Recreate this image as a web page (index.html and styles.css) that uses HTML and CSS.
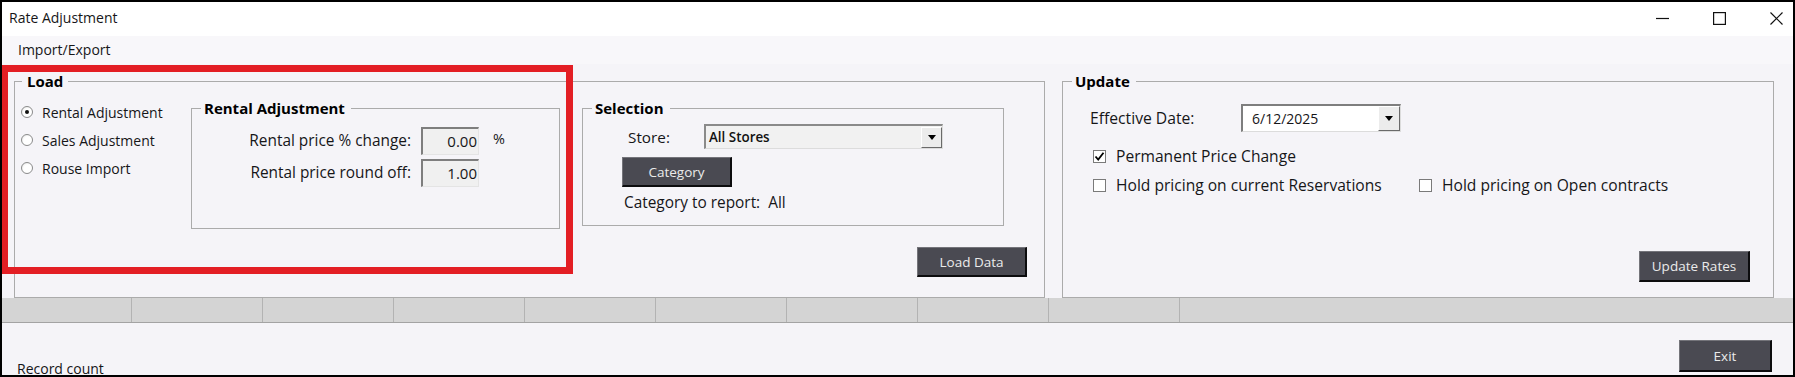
FILE: index.html
```html
<!DOCTYPE html>
<html lang="en">
<head>
<meta charset="utf-8">
<title>Rate Adjustment</title>
<link rel="stylesheet" href="styles.css">
</head>
<body>
<div class="window">
  <div class="titlebar">
    <span class="title">Rate Adjustment</span>
    <div class="caption-buttons">
      <span class="cap-btn"><svg width="13" height="13" viewBox="0 0 13 13"><path d="M0 6.5H13" stroke="#111" stroke-width="1.2"/></svg></span>
      <span class="cap-btn"><svg width="13" height="13" viewBox="0 0 13 13"><rect x="0.6" y="0.6" width="11.8" height="11.8" fill="none" stroke="#111" stroke-width="1.2"/></svg></span>
      <span class="cap-btn"><svg width="13" height="13" viewBox="0 0 13 13"><path d="M0.5 0.5L12.5 12.5M12.5 0.5L0.5 12.5" stroke="#111" stroke-width="1.2"/></svg></span>
    </div>
  </div>

  <div class="menubar"><span class="menu-item">Import/Export</span></div>

  <div class="main">
    <fieldset class="group group-load">
      <legend class="legend legend-load">Load</legend>
      <div class="load-top">
        <div class="radios">
          <label class="radio-row"><span class="radio checked"></span><span>Rental Adjustment</span></label>
          <label class="radio-row"><span class="radio"></span><span>Sales Adjustment</span></label>
          <label class="radio-row"><span class="radio"></span><span>Rouse Import</span></label>
        </div>

        <fieldset class="group group-rental">
          <legend class="legend">Rental Adjustment</legend>
          <div class="rental-fields">
            <span class="field-label">Rental price % change:</span>
            <span class="num-box">0.00</span>
            <span class="unit">%</span>
            <span class="field-label">Rental price round off:</span>
            <span class="num-box">1.00</span>
            <span class="unit"></span>
          </div>
        </fieldset>

        <fieldset class="group group-selection">
          <legend class="legend">Selection</legend>
          <div class="store-row">
            <span class="store-label">Store:</span>
            <div class="combo">
              <span class="combo-value">All Stores</span>
              <span class="combo-arrow"><span class="tri"></span></span>
            </div>
          </div>
          <div class="category-row"><button class="btn btn-category">Category</button></div>
          <div class="category-report">Category to report:&nbsp; All</div>
        </fieldset>
      </div>
      <div class="load-actions"><button class="btn btn-load">Load Data</button></div>
    </fieldset>

    <fieldset class="group group-update">
      <legend class="legend">Update</legend>
      <div class="date-row">
        <span class="date-label">Effective Date:</span>
        <div class="date-box">
          <span class="date-value">6/12/2025</span>
          <span class="combo-arrow date-arrow"><span class="tri"></span></span>
        </div>
      </div>
      <div class="check-row first">
        <label class="check-item"><span class="checkbox checked"><svg width="11" height="11" viewBox="0 0 11 11"><path d="M1.5 5.5L4.2 8.5L9.5 1.8" fill="none" stroke="#000" stroke-width="1.8"/></svg></span><span>Permanent Price Change</span></label>
      </div>
      <div class="check-row">
        <label class="check-item wide"><span class="checkbox"></span><span>Hold pricing on current Reservations</span></label>
        <label class="check-item"><span class="checkbox"></span><span>Hold pricing on Open contracts</span></label>
      </div>
      <div class="update-actions"><button class="btn btn-update">Update Rates</button></div>
    </fieldset>
  </div>

  <div class="grid-header">
    <span class="col first"></span>
    <span class="col"></span>
    <span class="col"></span>
    <span class="col"></span>
    <span class="col"></span>
    <span class="col"></span>
    <span class="col"></span>
    <span class="col"></span>
    <span class="col"></span>
  </div>

  <div class="footer">
    <span class="record-count">Record count</span>
    <button class="btn btn-exit">Exit</button>
  </div>

  <div class="annotation"></div>
</div>
</body>
</html>
```

FILE: styles.css
```css
* { box-sizing: border-box; }

html, body {
  margin: 0;
  padding: 0;
  background: #f5f4f8;
}

body {
  font-family: "Open Sans", "Noto Sans", sans-serif;
  font-size: 14px;
  color: #161618;
}

.window {
  position: relative;
  width: 1795px;
  height: 377px;
  border: 2px solid #000;
  background: #f5f4f8;
  display: flex;
  flex-direction: column;
  overflow: hidden;
}

/* title bar */
.titlebar {
  height: 34px;
  flex: 0 0 34px;
  background: #fff;
  display: flex;
  align-items: center;
  justify-content: space-between;
  padding: 0 10px 2px 7px;
}
.title { font-size: 14px; line-height: 16px; }
.caption-buttons { display: flex; gap: 44px; }
.cap-btn { display: flex; width: 13px; height: 13px; }

/* menu */
.menubar {
  height: 28px;
  flex: 0 0 28px;
  display: flex;
  align-items: center;
  padding-left: 16px;
  background: #f8f7fa;
}
.menu-item { font-size: 14px; line-height: 16px; }

/* main */
.main {
  height: 234px;
  flex: 0 0 234px;
  display: flex;
  align-items: stretch;
  padding: 0 19px 0 12px;
}

.group {
  margin: 0;
  padding: 0;
  min-width: 0;
  border: 1px solid #ababab;
}
.legend {
  font-weight: 700;
  font-size: 15px;
  line-height: 16px;
  padding: 0 6px 0 3px;
  margin-left: 9px;
  color: #000;
}
.legend-load { padding: 0 5px; margin-left: 7px; }

.group-load {
  margin-top: 9px;
  width: 1031px;
}
.load-top {
  display: flex;
  align-items: flex-start;
}

.radios {
  margin-left: 6px;
  width: 170px;
  padding-top: 9px;
  display: flex;
  flex-direction: column;
}
.radio-row {
  height: 28px;
  display: flex;
  align-items: center;
  gap: 9px;
  font-size: 14px;
}
.radio {
  width: 12px;
  height: 12px;
  border-radius: 50%;
  border: 1px solid #8a8b8b;
  background: radial-gradient(circle at 60% 60%, #ffffff 0 50%, #dcdcdc 100%);
  display: flex;
  align-items: center;
  justify-content: center;
}
.radio.checked::after {
  content: "";
  width: 4px;
  height: 4px;
  border-radius: 50%;
  background: #111;
}

/* rental adjustment */
.group-rental {
  margin-top: 11px;
  width: 369px;
  padding-bottom: 41px;
}
.rental-fields {
  padding-top: 11px;
  display: grid;
  grid-template-columns: 219px 58px auto;
  column-gap: 10px;
  row-gap: 4px;
  align-items: center;
}
.field-label {
  text-align: right;
  font-size: 15.4px;
  line-height: 18px;
}
.num-box {
  height: 28px;
  border-top: 2px solid #7e7e7e;
  border-left: 2px solid #7e7e7e;
  border-right: 1px solid #e4e4e4;
  border-bottom: 1px solid #e4e4e4;
  background: #f0f0f0;
  font-size: 15px;
  line-height: 25px;
  text-align: right;
  padding-right: 1px;
}
.unit { font-size: 14.4px; margin-left: 4px; line-height: 18px; padding-bottom: 4px; }

/* selection */
.group-selection {
  margin-top: 11px;
  margin-left: 22px;
  width: 422px;
  padding-bottom: 13px;
}
.store-row {
  margin-top: 8px;
  padding-left: 45px;
  display: flex;
  align-items: center;
}
.store-label {
  width: 76px;
  font-size: 15.3px;
  line-height: 18px;
}
.combo {
  width: 239px;
  height: 25px;
  display: flex;
  align-items: stretch;
  border-top: 2px solid #8a8a8a;
  border-left: 2px solid #8a8a8a;
  border-right: 1px solid #dcdcdc;
  border-bottom: 1px solid #dcdcdc;
  background: #f1f1f1;
}
.combo-value {
  flex: 1;
  padding-left: 3px;
  font-size: 13.4px;
  font-weight: 600;
  line-height: 22px;
  color: #111;
}
.combo-arrow {
  width: 21px;
  margin: 1px 0 0 0;
  background: #ececec;
  border-top: 1px solid #fff;
  border-left: 1px solid #fff;
  border-right: 1px solid #6a6a6a;
  border-bottom: 1px solid #6a6a6a;
  display: flex;
  align-items: center;
  justify-content: center;
}
.tri {
  width: 0;
  height: 0;
  border-left: 4px solid transparent;
  border-right: 4px solid transparent;
  border-top: 5px solid #000;
}
.category-row {
  margin-top: 8px;
  padding-left: 39px;
}
.category-report {
  margin-top: 7px;
  padding-left: 41px;
  font-size: 15.4px;
  line-height: 18px;
}

/* buttons */
.btn {
  font-family: "Open Sans", "Noto Sans", sans-serif;
  font-size: 13.5px;
  color: #ebebeb;
  background: #4a4a52;
  border-top: 1px solid #74747a;
  border-left: 1px solid #74747a;
  border-right: 2px solid #0c0c0e;
  border-bottom: 2px solid #0c0c0e;
  padding: 0;
  margin: 0;
  display: flex;
  align-items: center;
  justify-content: center;
}
.btn-category { width: 110px; height: 30px; }
.load-actions {
  margin-top: 18px;
  padding-bottom: 11px;
  display: flex;
  justify-content: flex-end;
  padding-right: 17px;
}
.btn-load { width: 110px; height: 30px; }

/* update */
.group-update {
  margin-top: 9px;
  margin-left: 17px;
  width: 712px;
}
.date-row {
  margin-top: 15px;
  padding-left: 27px;
  display: flex;
  align-items: center;
}
.date-label {
  width: 151px;
  font-size: 15.7px;
  line-height: 18px;
}
.date-box {
  width: 160px;
  height: 28px;
  display: flex;
  border-top: 2px solid #7e7e7e;
  border-left: 2px solid #7e7e7e;
  border-right: 1px solid #dcdcdc;
  border-bottom: 1px solid #dcdcdc;
  background: #fff;
}
.date-value {
  flex: 1;
  padding-left: 9px;
  font-size: 14px;
  line-height: 25px;
}
.date-arrow { width: 22px; margin: 0; }

.check-row {
  margin-top: 9px;
  padding-left: 30px;
  height: 20px;
  display: flex;
  align-items: center;
}
.check-row.first { margin-top: 14px; }
.check-item {
  display: flex;
  align-items: center;
  gap: 10px;
  font-size: 15.6px;
  line-height: 18px;
}
.check-item.wide { width: 326px; }
.checkbox {
  width: 13px;
  height: 13px;
  border: 1px solid #7a7a7a;
  background: #fff;
  display: flex;
  align-items: center;
  justify-content: center;
}
.update-actions {
  margin-top: 56px;
  padding-bottom: 6px;
  padding-right: 23px;
  display: flex;
  justify-content: flex-end;
}
.btn-update { width: 111px; height: 31px; }

/* grid header strip */
.grid-header {
  height: 25px;
  flex: 0 0 25px;
  display: flex;
  background: #d4d4d4;
  border-bottom: 1px solid #a3a3a3;
}
.col {
  flex: 0 0 131px;
  height: 100%;
  border-right: 1px solid #b3b3b3;
}
.col.first { flex-basis: 130px; }

/* footer */
.footer {
  flex: 1;
  display: flex;
  justify-content: space-between;
  align-items: flex-end;
  padding: 0 21px 3px 15px;
}
.record-count {
  font-size: 14px;
  line-height: 16px;
  margin-bottom: -5px;
}
.btn-exit { width: 93px; height: 32px; }

/* red highlight annotation drawn over the form */
.annotation {
  position: absolute;
  left: -1px;
  top: 63px;
  width: 572px;
  height: 209px;
  border: 7px solid #e31e24;
  pointer-events: none;
}
```
